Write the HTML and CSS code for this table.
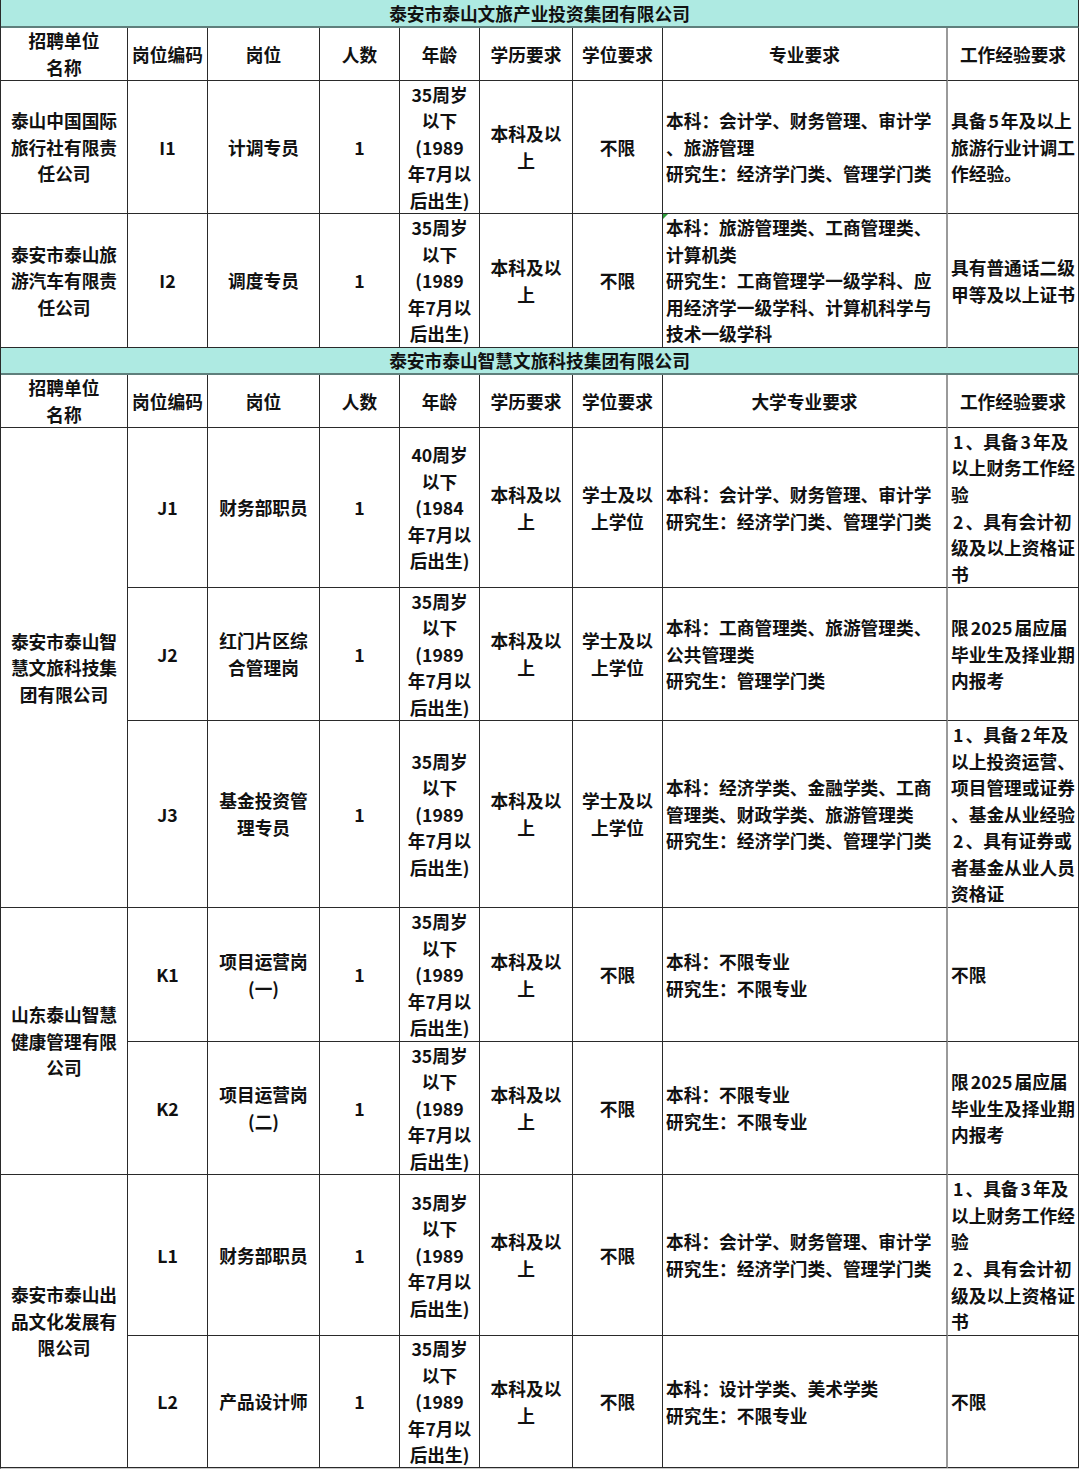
FILE: index.html
```html
<!DOCTYPE html>
<html lang="zh-CN">
<head>
<meta charset="utf-8">
<title>招聘岗位表</title>
<link rel="stylesheet" href="styles.css">
</head>
<body>
<div class="sheet">
  <div class="c title">泰安市泰山文旅产业投资集团有限公司</div>

  <div class="c">招聘单位<br>名称</div>
  <div class="c">岗位编码</div>
  <div class="c">岗位</div>
  <div class="c">人数</div>
  <div class="c">年龄</div>
  <div class="c">学历要求</div>
  <div class="c">学位要求</div>
  <div class="c major">专业要求</div>
  <div class="c last">工作经验要求</div>

  <div class="c">泰山中国国际<br>旅行社有限责<br>任公司</div>
  <div class="c">I1</div>
  <div class="c">计调专员</div>
  <div class="c">1</div>
  <div class="c">35周岁<br>以下<br>(1989<br>年7月以<br>后出生)</div>
  <div class="c">本科及以<br>上</div>
  <div class="c">不限</div>
  <div class="c major l"><span class="t">本科：会计学、财务管理、审计学<br>、旅游管理<br>研究生：经济学门类、管理学门类</span></div>
  <div class="c last l"><span class="t">具备<span class="num">5</span>年及以上<br>旅游行业计调工<br>作经验。</span></div>

  <div class="c">泰安市泰山旅<br>游汽车有限责<br>任公司</div>
  <div class="c">I2</div>
  <div class="c">调度专员</div>
  <div class="c">1</div>
  <div class="c">35周岁<br>以下<br>(1989<br>年7月以<br>后出生)</div>
  <div class="c">本科及以<br>上</div>
  <div class="c">不限</div>
  <div class="c major l flag"><span class="t">本科：旅游管理类、工商管理类、<br>计算机类<br>研究生：工商管理学一级学科、应<br>用经济学一级学科、计算机科学与<br>技术一级学科</span></div>
  <div class="c last l"><span class="t">具有普通话二级<br>甲等及以上证书</span></div>

  <div class="c title">泰安市泰山智慧文旅科技集团有限公司</div>

  <div class="c">招聘单位<br>名称</div>
  <div class="c">岗位编码</div>
  <div class="c">岗位</div>
  <div class="c">人数</div>
  <div class="c">年龄</div>
  <div class="c">学历要求</div>
  <div class="c">学位要求</div>
  <div class="c major">大学专业要求</div>
  <div class="c last">工作经验要求</div>

  <div class="c span3">泰安市泰山智<br>慧文旅科技集<br>团有限公司</div>
  <div class="c">J1</div>
  <div class="c">财务部职员</div>
  <div class="c">1</div>
  <div class="c">40周岁<br>以下<br>(1984<br>年7月以<br>后出生)</div>
  <div class="c">本科及以<br>上</div>
  <div class="c">学士及以<br>上学位</div>
  <div class="c major l"><span class="t">本科：会计学、财务管理、审计学<br>研究生：经济学门类、管理学门类</span></div>
  <div class="c last l"><span class="t"><span class="num">1</span>、具备<span class="num">3</span>年及<br>以上财务工作经<br>验<br><span class="num">2</span>、具有会计初<br>级及以上资格证<br>书</span></div>

  <div class="c">J2</div>
  <div class="c">红门片区综<br>合管理岗</div>
  <div class="c">1</div>
  <div class="c">35周岁<br>以下<br>(1989<br>年7月以<br>后出生)</div>
  <div class="c">本科及以<br>上</div>
  <div class="c">学士及以<br>上学位</div>
  <div class="c major l"><span class="t">本科：工商管理类、旅游管理类、<br>公共管理类<br>研究生：管理学门类</span></div>
  <div class="c last l"><span class="t">限<span class="num">2025</span>届应届<br>毕业生及择业期<br>内报考</span></div>

  <div class="c">J3</div>
  <div class="c">基金投资管<br>理专员</div>
  <div class="c">1</div>
  <div class="c">35周岁<br>以下<br>(1989<br>年7月以<br>后出生)</div>
  <div class="c">本科及以<br>上</div>
  <div class="c">学士及以<br>上学位</div>
  <div class="c major l"><span class="t">本科：经济学类、金融学类、工商<br>管理类、财政学类、旅游管理类<br>研究生：经济学门类、管理学门类</span></div>
  <div class="c last l"><span class="t"><span class="num">1</span>、具备<span class="num">2</span>年及<br>以上投资运营、<br>项目管理或证券<br>、基金从业经验<br><span class="num">2</span>、具有证券或<br>者基金从业人员<br>资格证</span></div>

  <div class="c span2">山东泰山智慧<br>健康管理有限<br>公司</div>
  <div class="c">K1</div>
  <div class="c">项目运营岗<br>(一)</div>
  <div class="c">1</div>
  <div class="c">35周岁<br>以下<br>(1989<br>年7月以<br>后出生)</div>
  <div class="c">本科及以<br>上</div>
  <div class="c">不限</div>
  <div class="c major l"><span class="t">本科：不限专业<br>研究生：不限专业</span></div>
  <div class="c last l"><span class="t">不限</span></div>

  <div class="c">K2</div>
  <div class="c">项目运营岗<br>(二)</div>
  <div class="c">1</div>
  <div class="c">35周岁<br>以下<br>(1989<br>年7月以<br>后出生)</div>
  <div class="c">本科及以<br>上</div>
  <div class="c">不限</div>
  <div class="c major l"><span class="t">本科：不限专业<br>研究生：不限专业</span></div>
  <div class="c last l"><span class="t">限<span class="num">2025</span>届应届<br>毕业生及择业期<br>内报考</span></div>

  <div class="c span2">泰安市泰山出<br>品文化发展有<br>限公司</div>
  <div class="c">L1</div>
  <div class="c">财务部职员</div>
  <div class="c">1</div>
  <div class="c">35周岁<br>以下<br>(1989<br>年7月以<br>后出生)</div>
  <div class="c">本科及以<br>上</div>
  <div class="c">不限</div>
  <div class="c major l"><span class="t">本科：会计学、财务管理、审计学<br>研究生：经济学门类、管理学门类</span></div>
  <div class="c last l"><span class="t"><span class="num">1</span>、具备<span class="num">3</span>年及<br>以上财务工作经<br>验<br><span class="num">2</span>、具有会计初<br>级及以上资格证<br>书</span></div>

  <div class="c">L2</div>
  <div class="c">产品设计师</div>
  <div class="c">1</div>
  <div class="c">35周岁<br>以下<br>(1989<br>年7月以<br>后出生)</div>
  <div class="c">本科及以<br>上</div>
  <div class="c">不限</div>
  <div class="c major l"><span class="t">本科：设计学类、美术学类<br>研究生：不限专业</span></div>
  <div class="c last l"><span class="t">不限</span></div>
</div>
</body>
</html>
```

FILE: styles.css
```css
html, body {
  margin: 0;
  padding: 0;
  background: #ffffff;
}

.sheet {
  width: 1079px;
  box-sizing: border-box;
  display: grid;
  grid-template-columns: 127px 80px 112px 80px 80px 93px 90px 285px 131px;
  grid-template-rows: 28px 53px 133px 134px 27px 53px 160px 133px 187px 134px 133px 161px 132px;
  border-left: 1px solid #2a2a2a;
  border-bottom: 1px solid #c8c8c8;
  font-family: "Noto Sans CJK SC", "Noto Sans", sans-serif;
  font-weight: 700;
  font-size: 17.7px;
  line-height: 26.6px;
  color: #111111;
}

.c {
  box-sizing: border-box;
  display: flex;
  align-items: center;
  justify-content: center;
  text-align: center;
  border-right: 1px solid #2a2a2a;
  border-bottom: 1px solid #2a2a2a;
  white-space: nowrap;
  overflow: hidden;
}

.t {
  display: block;
}

.title {
  grid-column: 1 / -1;
  background: #aeeae2;
  border-bottom: 2px solid #5f7f7c;
}

.span3 {
  grid-row: span 3;
}

.span2 {
  grid-row: span 2;
}

.major {
  border-right: 2px solid #9a9a9a;
}

.l {
  justify-content: flex-start;
  text-align: left;
  padding-left: 3px;
}

.num {
  padding: 0 2px;
}

.flag {
  position: relative;
}

.flag::before {
  content: "";
  position: absolute;
  left: 0;
  top: 0;
  border-top: 5px solid #2e9d3a;
  border-right: 5px solid transparent;
}
```
